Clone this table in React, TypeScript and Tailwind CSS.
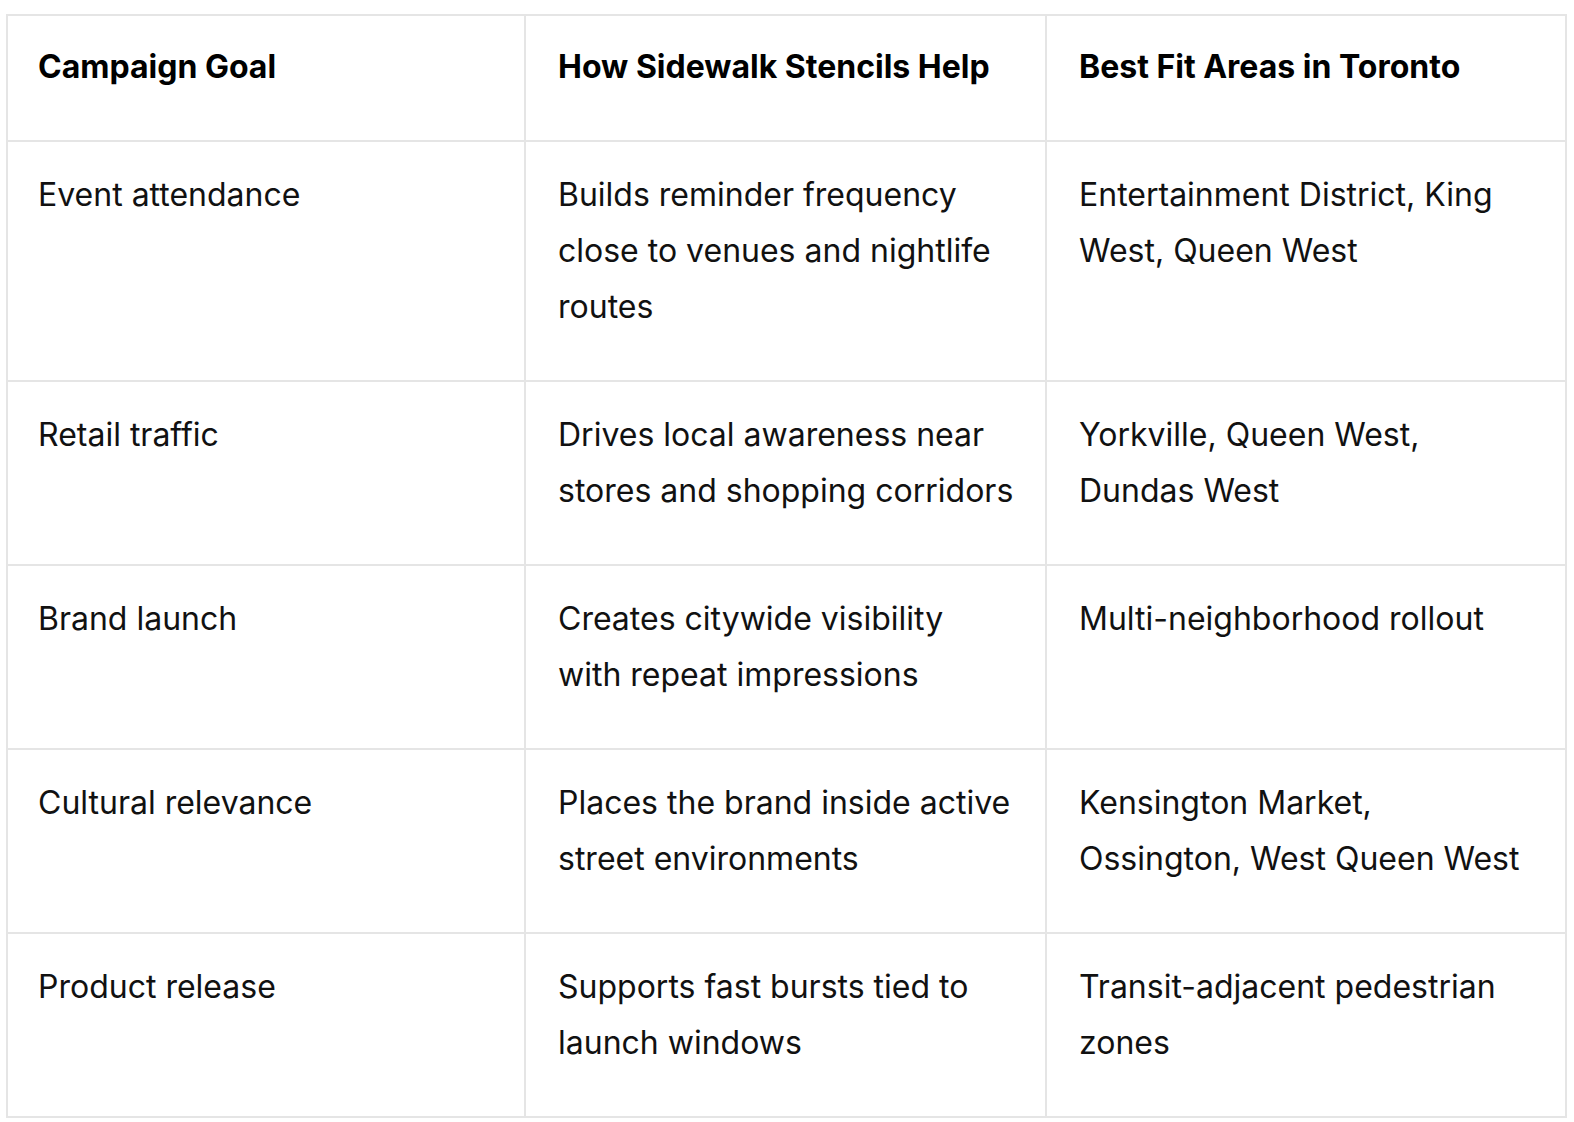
const rows = [
  {
    goal: 'Event attendance',
    help: 'Builds reminder frequency close to venues and nightlife routes',
    areas: 'Entertainment District, King West, Queen West',
  },
  {
    goal: 'Retail traffic',
    help: 'Drives local awareness near stores and shopping corridors',
    areas: 'Yorkville, Queen West, Dundas West',
  },
  {
    goal: 'Brand launch',
    help: 'Creates citywide visibility with repeat impressions',
    areas: 'Multi-neighborhood rollout',
  },
  {
    goal: 'Cultural relevance',
    help: 'Places the brand inside active street environments',
    areas: 'Kensington Market, Ossington, West Queen West',
  },
  {
    goal: 'Product release',
    help: 'Supports fast bursts tied to launch windows',
    areas: 'Transit-adjacent pedestrian zones',
  },
];

// first column sits a touch closer to its left border than the other two
const cols = [
  'border-2 border-[#e5e5e5] pl-[30px] pr-[32px] align-top',
  'border-2 border-[#e5e5e5] pl-[32px] pr-[30px] align-top',
  'border-2 border-[#e5e5e5] pl-[32px] pr-[30px] align-top',
];

const headers = ['Campaign Goal', 'How Sidewalk Stencils Help', 'Best Fit Areas in Toronto'];

export default function App() {
  return (
    <div className="min-h-screen bg-white pl-[6px] pr-[7px] pt-[14px] font-['Inter',sans-serif] text-[32px] leading-[56px] text-[#111111]">
      <table className="w-full table-fixed border-collapse text-left">
        <colgroup>
          <col className="w-[518px]" />
          <col className="w-[521px]" />
          <col />
        </colgroup>
        <thead>
          <tr>
            {headers.map((h, i) => (
              <th key={h} className={`${cols[i]} pt-[23px] pb-[45px] font-bold text-black`}>
                {h}
              </th>
            ))}
          </tr>
        </thead>
        <tbody>
          {rows.map((r) => (
            <tr key={r.goal}>
              {[r.goal, r.help, r.areas].map((text, i) => (
                <td key={i} className={`${cols[i]} pt-[25px] pb-[45px] font-normal`}>
                  {text}
                </td>
              ))}
            </tr>
          ))}
        </tbody>
      </table>
    </div>
  );
}
